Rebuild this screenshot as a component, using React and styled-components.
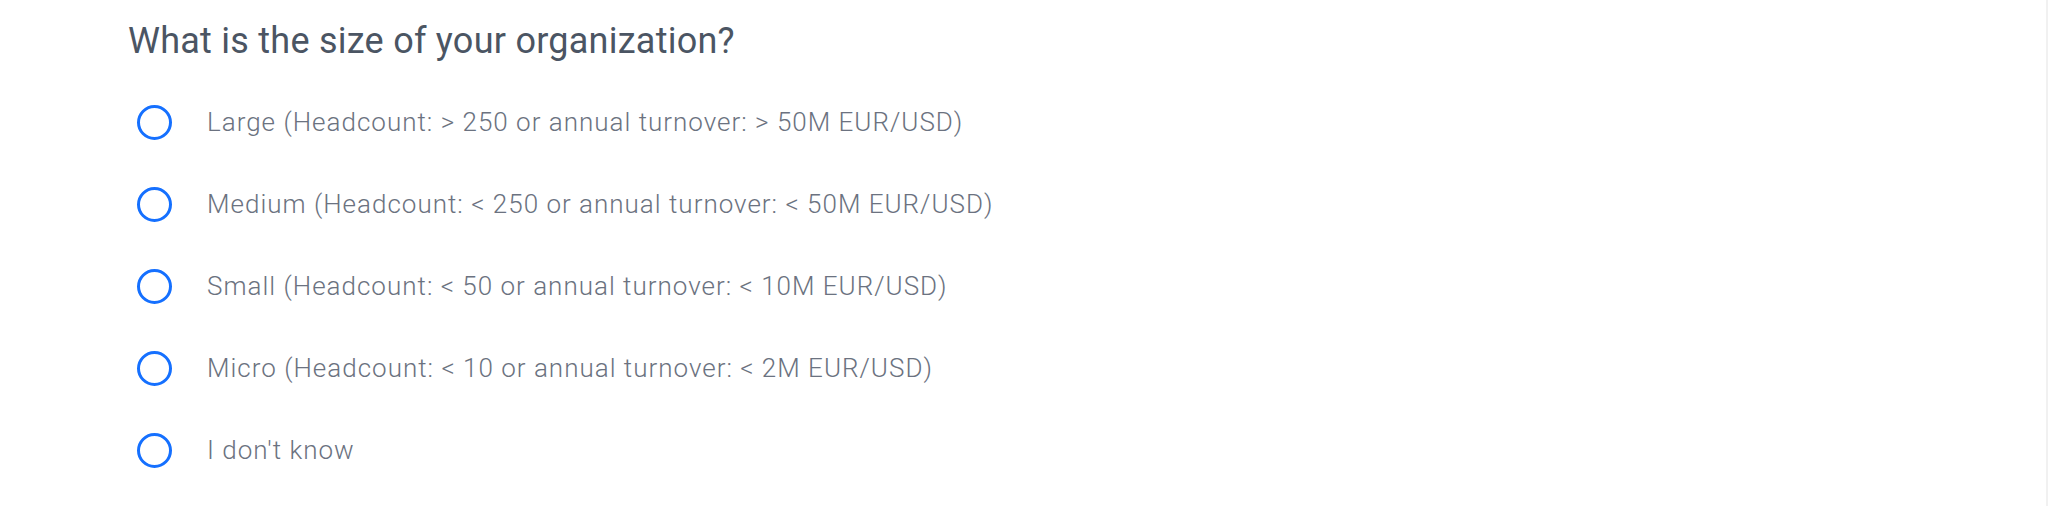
import React, { useState } from 'react';
import styled, { createGlobalStyle } from 'styled-components';

const GlobalStyle = createGlobalStyle`
  html, body {
    margin: 0;
    padding: 0;
    background: #ffffff;
  }
`;

const Page = styled.div`
  box-sizing: border-box;
  width: 2048px;
  height: 506px;
  padding: 19px 0 0 128px;
  border-right: 2px solid #f1f1f1;
  font-family: Roboto, "Open Sans", sans-serif;
  overflow: hidden;
`;

const Question = styled.fieldset`
  border: none;
  margin: 0;
  padding: 0;
`;

const Title = styled.legend`
  padding: 0;
  margin: 0 0 18px;
  font-size: 36px;
  line-height: 44px;
  font-weight: 400;
  letter-spacing: 0.25px;
  color: #4b5563;
`;

const OptionList = styled.div`
  display: flex;
  flex-direction: column;
`;

const OptionRow = styled.label`
  display: flex;
  align-items: center;
  gap: 35px;
  height: 82px;
  padding-left: 9px;
  cursor: pointer;
`;

const Radio = styled.input`
  appearance: none;
  box-sizing: border-box;
  width: 35px;
  height: 35px;
  margin: 0;
  flex-shrink: 0;
  border: 3px solid #1570ff;
  border-radius: 50%;
  background: #fff;
  cursor: pointer;

  &:checked {
    background: radial-gradient(circle, #1570ff 0 7px, #fff 8px);
  }
`;

const OptionText = styled.span`
  font-size: 26px;
  font-weight: 300;
  letter-spacing: 1px;
  color: #6b7280;
`;

const options = [
  'Large (Headcount: > 250 or annual turnover: > 50M EUR/USD)',
  'Medium (Headcount: < 250 or annual turnover: < 50M EUR/USD)',
  'Small (Headcount: < 50 or annual turnover: < 10M EUR/USD)',
  'Micro (Headcount: < 10 or annual turnover: < 2M EUR/USD)',
  "I don't know",
];

const App = () => {
  const [size, setSize] = useState(null);

  return (
    <Page>
      <GlobalStyle />
      <Question>
        <Title>What is the size of your organization?</Title>
        <OptionList>
          {options.map((label) => (
            <OptionRow key={label}>
              <Radio
                type="radio"
                name="org-size"
                checked={size === label}
                onChange={() => setSize(label)}
              />
              <OptionText>{label}</OptionText>
            </OptionRow>
          ))}
        </OptionList>
      </Question>
    </Page>
  );
};

export default App;
